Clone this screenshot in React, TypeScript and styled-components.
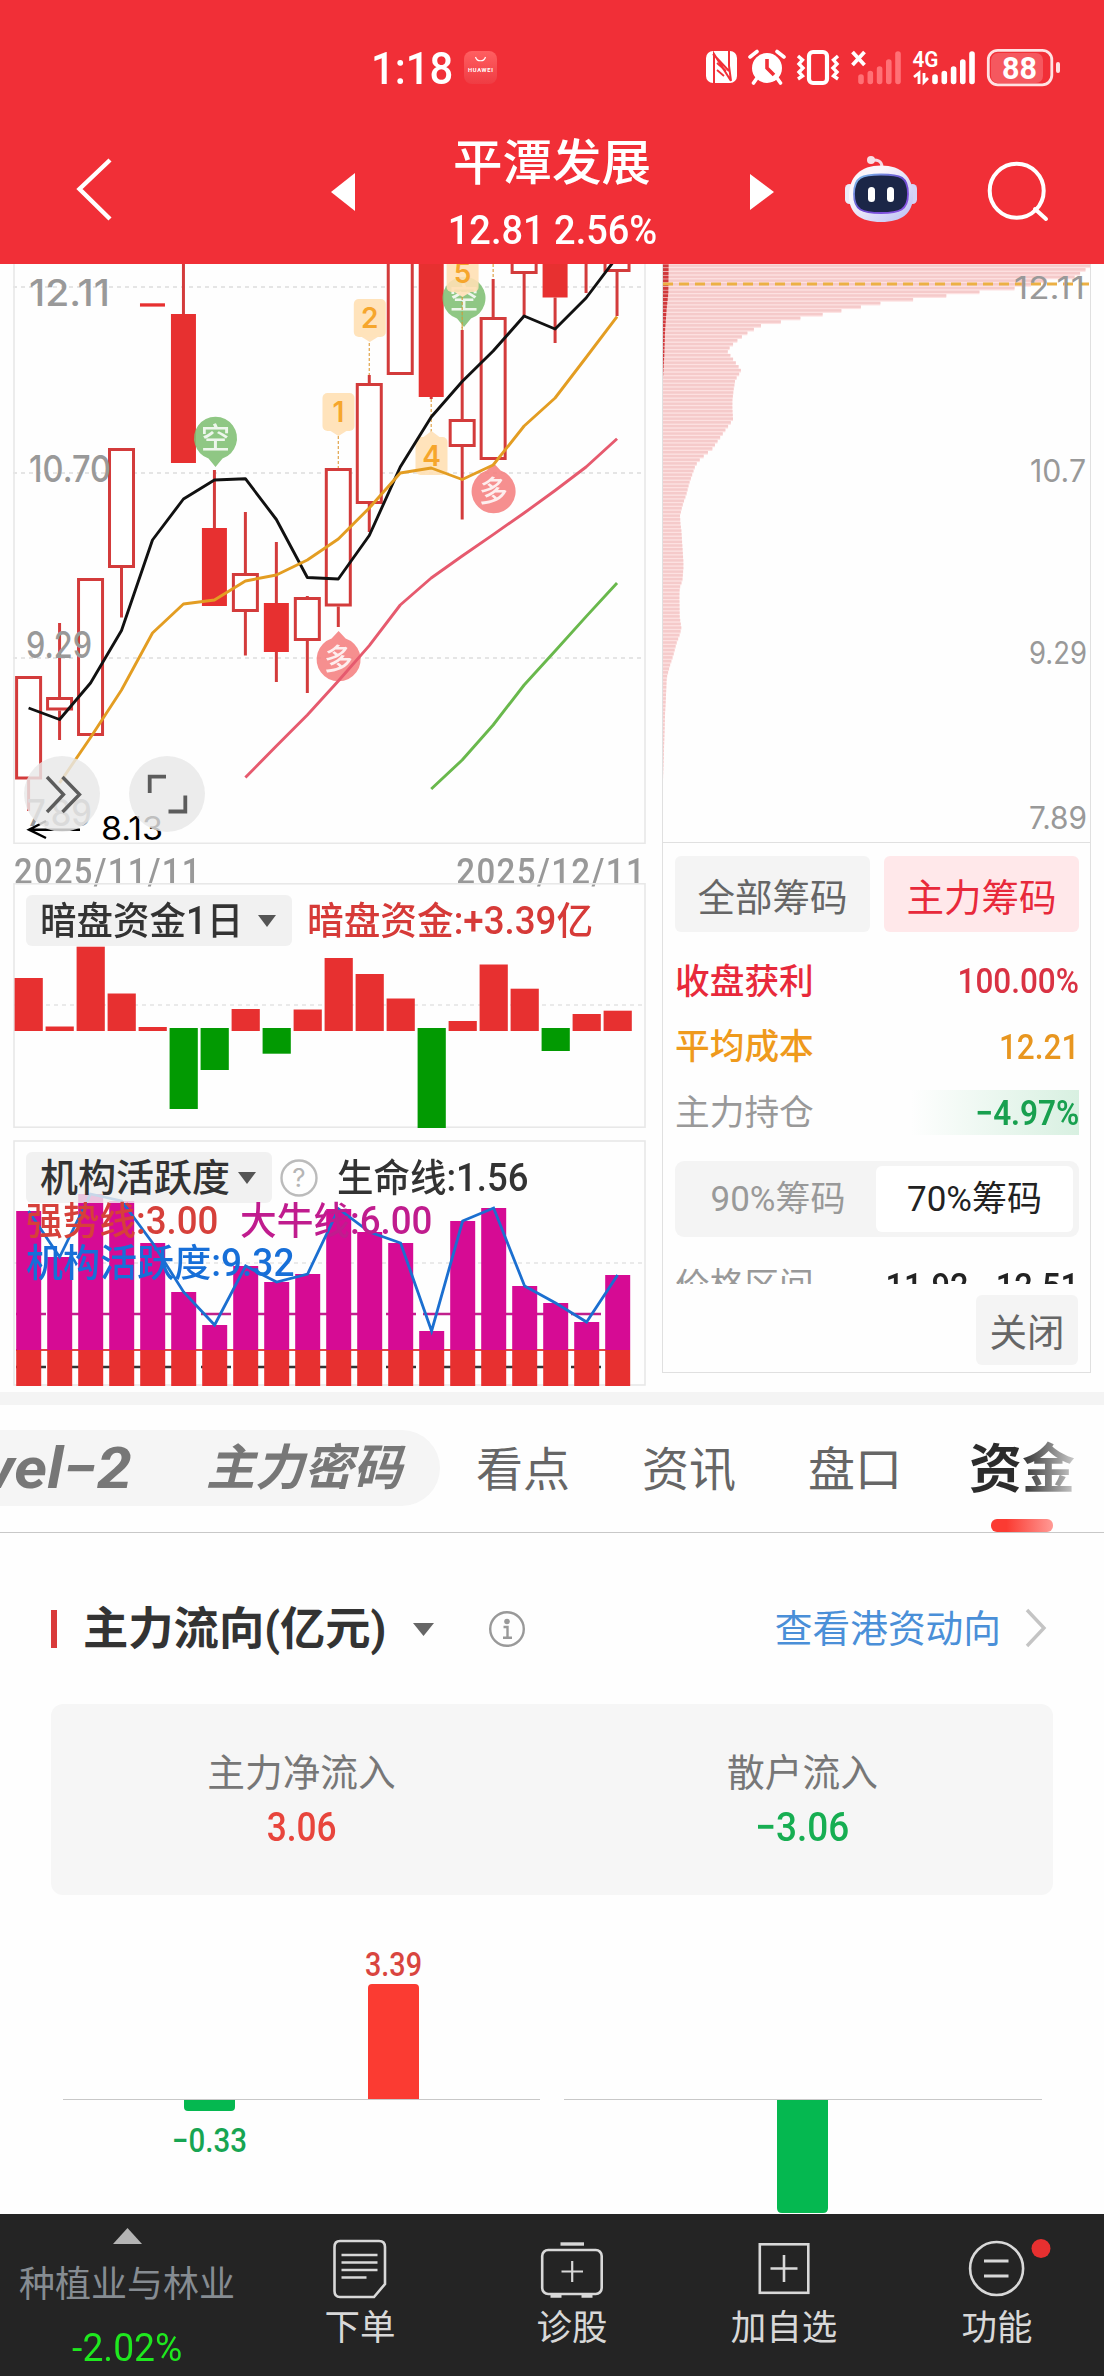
import React from 'react';
import styled, { createGlobalStyle } from 'styled-components';

const SANS = `Roboto, "Noto Sans CJK SC", sans-serif`;
const LABEL = `Inter, "Noto Sans CJK SC", sans-serif`;

const Global = createGlobalStyle`
  * { box-sizing: border-box; }
  body { margin: 0; background: #fefefe; font-family: ${SANS}; }
  svg { display: block; flex: none; }
`;

const Screen = styled.div`
  width: 1104px;
  height: 2376px;
  overflow: hidden;
  display: flex;
  flex-direction: column;
  background: #fefefe;
`;

const Txt = styled.span<{
  $size: number; $color?: string; $weight?: number; $scale?: number; $origin?: string; $track?: number;
}>`
  display: inline-block;
  white-space: nowrap;
  padding-top: 3px;
  line-height: 1.2;
  font-size: ${p => p.$size}px;
  color: ${p => p.$color || '#333'};
  font-weight: ${p => p.$weight || 400};
  letter-spacing: ${p => p.$track || 0}px;
  transform: scaleX(${p => p.$scale || 1});
  transform-origin: ${p => p.$origin || 'center'};
`;

/* ---------- header ---------- */
const Header = styled.header`
  height: 264px;
  flex: none;
  background: #f12f37;
  display: flex;
  flex-direction: column;
`;
const StatusBar = styled.div`
  height: 136px;
  display: grid;
  grid-template-columns: 333px 1fr;
  column-gap: 38px;
  align-items: center;
  padding-right: 44px;
`;
const Clock = styled.div`
  grid-column: 2;
  display: flex;
  align-items: center;
`;
const AppBadge = styled.div`
  width: 33px;
  height: 33px;
  margin-left: 6px;
  border-radius: 8px;
  background: linear-gradient(#ff5f61, #ef3c43);
`;
const StatusIcons = styled.div`
  margin-left: auto;
`;
const NavRow = styled.div`
  height: 128px;
  display: grid;
  grid-template-columns: 331px 24px 1fr 24px 70px 72px 188px;
`;
const Cell = styled.div<{ $pl?: number; $pt: number }>`
  padding: ${p => p.$pt}px 0 0 ${p => p.$pl || 0}px;
`;
const TitleBlock = styled.div`
  display: flex;
  flex-direction: column;
  align-items: center;
`;
const Name = styled(Txt)`
  height: 57px;
  padding-top: 1px;
  line-height: 54px;
`;
const Quote = styled(Txt)`
  padding-top: 0;
  line-height: 74px;
`;

/* ---------- charts ---------- */
const Charts = styled.section`
  height: 1128px;
  flex: none;
  display: grid;
  grid-template-columns: 650px 454px;
`;
const LeftCol = styled.div`
  display: flex;
  flex-direction: column;
`;
const Dates = styled.div`
  height: 39px;
  padding: 3px 4px 0 14px;
  display: flex;
  justify-content: space-between;
`;
const Panel = styled.div<{ $mb?: number }>`
  position: relative;
  margin-bottom: ${p => p.$mb || 0}px;
`;
const PanelHead = styled.div`
  position: absolute;
  left: 26px;
  top: 12px;
  display: flex;
  align-items: center;
`;
const Picker = styled.div<{ $w: number }>`
  width: ${p => p.$w}px;
  height: 51px;
  padding: 0 16px 0 14px;
  border-radius: 6px;
  background: rgba(238, 238, 238, 0.82);
  display: flex;
  align-items: center;
  justify-content: space-between;
`;
const Legend = styled.div<{ $top: number }>`
  position: absolute;
  left: 26px;
  top: ${p => p.$top}px;
  display: flex;
  gap: 15px;
`;

const ChipCol = styled.div`
  margin: 0 13px 0 12px;
  height: 1109px;
  border: 1px solid #e0e0e0;
  border-top: 0;
`;
const ChipBody = styled.div`
  border-top: 1px solid #e0e0e0;
  padding: 13px 11px 0 12px;
`;
const Buttons = styled.div`
  display: grid;
  grid-template-columns: 195px 195px;
  justify-content: space-between;
  height: 76px;
  margin-bottom: 16px;
`;
const Btn = styled.button<{ $on?: boolean }>`
  border: 0;
  padding: 0;
  border-radius: 6px;
  font: 400 37.5px ${SANS};
  white-space: nowrap;
  color: ${p => (p.$on ? '#e8293b' : '#666')};
  background: ${p => (p.$on ? '#ffe8ea' : '#f4f4f4')};
`;
const Row = styled.div`
  height: 65.8px;
  display: flex;
  align-items: center;
  justify-content: space-between;
`;
const Hold = styled.div`
  width: 168px;
  height: 45px;
  display: flex;
  justify-content: flex-end;
  align-items: center;
  background: linear-gradient(90deg, rgba(214, 240, 224, 0), #d8f0e1);
`;
const Segment = styled.div`
  height: 76px;
  margin-top: 15.6px;
  padding: 5px;
  border-radius: 9px;
  background: #f4f4f4;
  display: grid;
  grid-template-columns: 196px 197px;
`;
const SegItem = styled.div<{ $on?: boolean }>`
  display: flex;
  align-items: center;
  justify-content: center;
  border-radius: 6px;
  background: ${p => (p.$on ? '#fff' : 'transparent')};
`;
const Clipped = styled.div`
  height: 47px;
  overflow: hidden;
  padding-top: 26px;
  display: flex;
  justify-content: space-between;
`;
const Close = styled(Btn)`
  display: block;
  width: 102px;
  height: 70px;
  margin: 11px 1px 0 auto;
`;

/* ---------- tabs ---------- */
const Band = styled.div`
  height: 13px;
  flex: none;
  background: #f4f4f4;
`;
const Tabs = styled.nav`
  height: 128px;
  flex: none;
  border-bottom: 1px solid #c8c8c8;
  display: flex;
  align-items: flex-start;
`;
const Pill = styled.div`
  width: 440px;
  height: 76px;
  margin-top: 25px;
  border-radius: 0 38px 38px 0;
  background: #f5f5f5;
  display: flex;
  align-items: center;
  justify-content: flex-end;
  gap: 74px;
  padding-right: 38px;
  overflow: hidden;
  font-style: italic;
`;
const Tab = styled.div<{ $ml: number }>`
  margin-left: ${p => p.$ml}px;
  height: 127px;
  display: flex;
  flex-direction: column;
  align-items: center;
  & > span { line-height: 127px; padding-top: 1px; }
`;
const ActiveTab = styled(Tab)`
  position: relative;
  & > span {
    padding-top: 3px;
    line-height: 124px;
    background: linear-gradient(90deg, #2c2c2c 48%, #d0d0d0 102%);
    -webkit-background-clip: text;
    color: transparent;
  }
`;
const Indicator = styled.i`
  position: absolute;
  bottom: 0;
  width: 62px;
  height: 13px;
  border-radius: 6px;
  background: linear-gradient(90deg, #fb3b32 25%, #ff9a95);
`;

/* ---------- fund flow ---------- */
const Flow = styled.section`
  flex: none;
  height: 681px;
  padding: 0 51px;
`;
const FlowHead = styled.div`
  height: 171px;
  padding-top: 20px;
  display: flex;
  align-items: center;
`;
const Mark = styled.i`
  width: 6px;
  height: 38px;
  margin-right: 26px;
  background: #d93a3a;
`;
const Link = styled.a`
  margin-left: auto;
  display: flex;
  align-items: center;
  gap: 23px;
  padding-right: 6px;
`;
const Card = styled.div`
  height: 191px;
  border-radius: 12px;
  background: #f6f6f6;
  display: grid;
  grid-template-columns: 1fr 1fr;
`;
const Stat = styled.div`
  display: flex;
  flex-direction: column;
  align-items: center;
  padding-top: 44px;
  gap: 4px;
`;
const FlowChart = styled.div`
  margin: 0 -51px;
`;

/* ---------- footer ---------- */
const Footer = styled.footer`
  height: 163px;
  flex: none;
  background: #242424;
  display: grid;
  grid-template-columns: 254px 212px 212px 212px 214px;
`;
const Sector = styled.div`
  display: flex;
  flex-direction: column;
  align-items: center;
  gap: 19px;
  padding-top: 14px;
  & > span { line-height: 43px; padding-top: 1px; }
`;
const Action = styled.div`
  display: flex;
  flex-direction: column;
  align-items: center;
  padding-top: 21px;
  gap: 3px;
`;

/* ---------- data ---------- */
const cx = (i: number) => 28.6 + i * 30.97;
type Candle = { f?: boolean; t: number; b: number; h?: number; l?: number };
const candles: Candle[] = [
  { t: 676, b: 779.5, l: 811 }, { t: 697, b: 710.5, h: 623, l: 740 }, { t: 578, b: 736 },
  { t: 448, b: 568, l: 617.5 }, { f: true, t: 303.3, b: 306.6 }, { f: true, t: 314, b: 463, h: 250 },
  { f: true, t: 528, b: 606, h: 470 }, { t: 573, b: 612, h: 512, l: 655.5 },
  { f: true, t: 603, b: 652, h: 542, l: 682 }, { t: 597, b: 641, h: 596, l: 693 },
  { t: 468, b: 606.5, l: 627 }, { t: 383, b: 504, h: 375, l: 532 }, { t: 240, b: 375 },
  { f: true, t: 240, b: 397, l: 399 }, { t: 419, b: 447, h: 330, l: 519.5 },
  { t: 317, b: 460, h: 279 }, { t: 240, b: 274, l: 316 }, { f: true, t: 240, b: 297.5, l: 343 },
  { t: 240, b: 250, l: 293 }, { t: 240, b: 272, l: 316 },
];
const path = (start: number, ys: number[]) => ys.map((y, k) => `${cx(start + k)},${y}`).join(' ');
const ma5 = [708, 719.5, 683, 630.5, 540, 499, 480, 478.7, 519.5, 577.5, 579, 535.5, 467, 417, 381.5, 351, 316, 329, 298, 257];
const ma10 = [783, 737.5, 690, 633, 604, 600, 581, 575, 560, 539, 508, 473, 468, 479.5, 465, 426, 398, 357.5, 316.6];
const ma20 = [777.5, 746, 715, 681, 645.6, 605, 578, 556, 534.6, 513, 490.5, 467, 438.7];
const ma30 = [789, 760, 725, 685, 651, 616.6, 583];
const dark = [978, 1026.5, 946.7, 993.5, 1027, 1109, 1070, 1009, 1053.7, 1009.5, 958, 974, 998.5, 1128, 1021, 964.5, 988.7, 1051, 1014, 1010.7];
const active = [1211, 1257, 1194, 1201, 1243, 1292, 1325, 1266, 1282, 1274, 1209, 1232, 1243, 1331, 1221, 1208, 1286, 1303, 1322, 1275];

const chipProfile: [number, number][] = [
  [28, 1284], [38, 1267], [47, 1252], [57, 1237], [67, 1150], [86, 1060], [95, 962], [105, 860], [115, 758], [125, 655],
  [135, 595], [145, 535], [154, 484], [164, 415], [174, 355], [184, 294], [194, 272], [203, 254], [213, 237], [223, 223],
  [232, 211], [242, 200], [252, 194], [262, 202], [281, 218], [300, 234], [310, 229], [320, 221], [330, 216], [350, 212],
  [380, 208], [400, 208], [428, 210], [438, 203], [457, 187], [497, 155], [507, 147], [516, 134], [526, 121], [536, 109],
  [545, 101], [555, 95], [575, 87], [595, 79], [625, 70], [655, 58], [680, 51], [700, 52], [720, 55], [760, 58], [800, 61],
  [820, 61], [850, 58], [870, 50], [890, 49], [945, 50], [975, 55], [995, 49], [1015, 40], [1045, 31], [1075, 20],
  [1105, 11], [1150, 9], [1200, 6], [1260, 4], [1320, 2], [1370, 0],
];
const mainProfile: [number, number][] = [[20, 17], [100, 16], [140, 11], [200, 6], [260, 4], [320, 0]];
const lerp = (pts: [number, number][], y: number) => {
  for (let i = 1; i < pts.length; i++) {
    const [y0, v0] = pts[i - 1];
    const [y1, v1] = pts[i];
    if (y <= y1) return Math.max(0, v0 + ((v1 - v0) * (y - y0)) / (y1 - y0));
  }
  return 0;
};

const CW: React.FC<{ x: number; y: number; w: number; size: number; fill: string; anchor?: 'start' | 'end'; weight?: number; children: string }> =
  ({ x, y, w, size, fill, anchor, weight, children }) => (
    <text x={anchor === 'end' ? x - w : x} y={y} fontSize={size} fill={fill} fontFamily={LABEL} fontWeight={weight || 400}
      textLength={w} lengthAdjust="spacingAndGlyphs">{children}</text>
  );

const Caret = ({ w = 18, h = 12, color = '#555' }) => (
  <svg width={w} height={h}><path d={`M0 0H${w}L${w / 2} ${h}Z`} fill={color} /></svg>
);

const Bubble: React.FC<{ x: number; y: number; up?: boolean; color: string; children: string }> = ({ x, y, up, color, children }) => (
  <g>
    <g fill={color} fillOpacity={0.88}>
      <path d={up
        ? `M${x} ${y - 28}L${x + 7} ${y - 20.5}A22 22 0 1 1 ${x - 7} ${y - 20.5}Z`
        : `M${x} ${y + 29}L${x - 7} ${y + 20.5}A21.5 21.5 0 1 1 ${x + 7} ${y + 20.5}Z`} />
    </g>
    <text x={x} y={y + 10.5} fontSize={29} fontWeight={500} textAnchor="middle" fill="#fff" fontFamily={SANS} opacity={0.85}>{children}</text>
  </g>
);

const Tag: React.FC<{ x: number; y: number; up?: boolean; children: string }> = ({ x, y, up, children }) => (
  <g>
    <rect x={x - 16} y={y} width={32} height={38} rx={5} fill="#ffe0b4" opacity={0.9} />
    <path d={up ? `M${x - 8} ${y}L${x} ${y - 6}L${x + 8} ${y}Z` : `M${x - 8} ${y + 38}L${x} ${y + 43}L${x + 8} ${y + 38}Z`} fill="#ffe3bd" />
    <text x={x} y={y + 29} fontSize={28} fontWeight={600} textAnchor="middle" fill="#f6a62c" fontFamily={LABEL}>{children}</text>
  </g>
);

const KLine = () => (
  <svg width={650} height={580} viewBox="0 264 650 580">
    <g stroke="#ddd" strokeWidth={1.3} strokeDasharray="4 4">
      <path d="M13 287H645M13 473H645M13 658H645" />
    </g>
    <path d="M14 264V843.2H645V264" fill="none" stroke="#e8e8e8" strokeWidth={1.6} />
    {candles.map((c, i) => (
      <g key={i}>
        {c.h && <path d={`M${cx(i)} ${c.h}V${c.t}`} stroke="#d33b3b" strokeWidth={3} />}
        {c.l && <path d={`M${cx(i)} ${c.b}V${c.l}`} stroke="#d33b3b" strokeWidth={3} />}
        {c.f
          ? <rect x={cx(i) - 12.5} y={c.t} width={25} height={c.b - c.t} fill="#e73030" />
          : <rect x={cx(i) - 12} y={c.t + 1.5} width={24} height={c.b - c.t - 3} fill="#fff" stroke="#d33b3b" strokeWidth={3} />}
      </g>
    ))}
    <CW x={29} y={306} w={81} size={36.5} fill="#999" weight={500}>12.11</CW>
    <CW x={29} y={482} w={82} size={36.5} fill="#999" weight={500}>10.70</CW>
    <CW x={26} y={658} w={66} size={36.5} fill="#999" weight={500}>9.29</CW>
    <CW x={27} y={826} w={65} size={36.5} fill="#999" weight={500}>7.89</CW>
    <g stroke="#e0a44a" strokeWidth={1.2} strokeDasharray="3 2">
      <path d={`M${cx(10)} 436V468M${cx(11)} 343V375M${cx(13)} 399V432M${cx(14)} 290V330M${cx(15)} 264V279`} />
    </g>
    <Bubble x={215.5} y={438} color="#7fbf73">空</Bubble>
    <Bubble x={338.6} y={659} up color="#f57f80">多</Bubble>
    <Bubble x={493.6} y={491} up color="#f57f80">多</Bubble>
    <Tag x={338.5} y={393}>1</Tag>
    <Tag x={369.8} y={299}>2</Tag>
    <Tag x={431.5} y={437} up>4</Tag>
    <Bubble x={464} y={298} color="#7fbf73">空</Bubble>
    <Tag x={462.6} y={254}>5</Tag>
    <path d={`M${cx(14)} 297V330`} stroke="#c9a040" strokeWidth={1.2} strokeDasharray="3 2" />
    <g fill="none" strokeWidth={2.9} strokeLinejoin="round">
      <polyline points={path(0, ma5)} stroke="#111" />
      <polyline points={path(1, ma10)} stroke="#e39d22" />
      <polyline points={path(7, ma20)} stroke="#e65a6e" />
      <polyline points={path(13, ma30)} stroke="#69b84c" />
    </g>
    <path d="M80 829.7H30M46 821L29 829.7L46 838" fill="none" stroke="#000" strokeWidth={2.4} />
    <CW x={101} y={839.5} w={62} size={32} fill="#000">8.13</CW>
    <g fill="#e9e9e9" opacity={0.82}>
      <circle cx={62} cy={794} r={38} />
      <circle cx={167} cy={794} r={38} />
    </g>
    <g fill="none" stroke="#5c5c5c">
      <path d="M47 777L63.5 794.5L47 812M62.5 777L79.5 794.5L62.5 812" strokeWidth={3.4} />
      <path d="M149.7 793V776.7H166M185.3 795.5V811.5H168.5" strokeWidth={3.8} />
    </g>
  </svg>
);

const HiddenFunds = () => (
  <svg width={650} height={246} viewBox="0 883 650 246">
    <rect x={14} y={883.8} width={631} height={243.4} fill="none" stroke="#e8e8e8" strokeWidth={1.6} />
    <path d="M14 1005H645" stroke="#e4e4e4" strokeWidth={1.4} strokeDasharray="4 4" />
    {dark.map((v, i) => {
      const neg = [5, 6, 8, 13, 17].includes(i);
      const top = neg ? 1028 : v;
      return <rect key={i} x={14.6 + i * 31} y={top} width={28.2} height={(neg ? v : 1031) - top} fill={neg ? '#029a02' : '#e73030'} />;
    })}
  </svg>
);

const Activity = () => (
  <svg width={650} height={252} viewBox="0 1140 650 252">
    <rect x={14} y={1141} width={631} height={244} fill="none" stroke="#e8e8e8" strokeWidth={1.6} />
    <path d="M14 1263H645" stroke="#e4e4e4" strokeWidth={1.4} strokeDasharray="4 4" />
    <path d="M16 1314H604" stroke="#c0208c" strokeWidth={2.4} strokeDasharray="30 7" />
    <path d="M16 1367H604" stroke="#333" strokeWidth={2.4} strokeDasharray="30 7" />
    <path d="M16 1350H629" stroke="#e04545" strokeWidth={2.2} />
    {active.map((v, i) => (
      <g key={i}>
        <rect x={16.2 + i * 31} y={v} width={25} height={1350 - v} fill="#d60b94" />
        <rect x={16.2 + i * 31} y={1350} width={25} height={36} fill="#e73030" />
      </g>
    ))}
    <polyline points={active.map((v, i) => `${28.6 + i * 31},${v}`).join(' ')} fill="none" stroke="#1b6fd0" strokeWidth={2.8} />
  </svg>
);

const ChipChart = () => {
  const rows = Array.from({ length: 139 }, (_, k) => 28 + k * 9.75);
  return (
    <svg width={427} height={578} viewBox="663 264 427 578">
      {rows.map((y, k) => {
        const w = lerp(chipProfile, y) / 3;
        const m = lerp(mainProfile, y) / 3;
        const py = 255 + (y - 3.5) / 2.613;
        return (
          <g key={k}>
            <rect x={663} y={py} width={w} height={3.73} fill="#fde1e1" />
            <rect x={663} y={py} width={w} height={2.5} fill="#f5caca" />
            <rect x={663} y={py} width={m} height={3.1} fill="#d0393c" />
          </g>
        );
      })}
      <path d="M663 284H1089" stroke="#ecb044" strokeWidth={3} strokeDasharray="10 6" />
      <CW x={1085} y={299} w={71} size={30.5} fill="#999" anchor="end">12.11</CW>
      <CW x={1086} y={481.5} w={56} size={30.5} fill="#999" anchor="end">10.7</CW>
      <CW x={1087} y={663.5} w={58} size={30.5} fill="#999" anchor="end">9.29</CW>
      <CW x={1087} y={828.5} w={58} size={30.5} fill="#999" anchor="end">7.89</CW>
    </svg>
  );
};

const StatusGlyphs = () => (
  <svg width={356} height={40} viewBox="704 48 356 40">
    <rect x={706} y={51} width={31} height={32} rx={7} fill="#fff" />
    <path d="M714 83V54L731 81M729 51V66L731 81M713 54L729 71" fill="none" stroke="#f12f37" strokeWidth={2} />
    <path d="M717 63L726 71M717 70L724 76" stroke="#f12f37" strokeWidth={1.8} />
    <circle cx={767} cy={68} r={15} fill="#fff" />
    <path d="M750 57L757 51.5M784 57L777 51.5M757 78L753.5 83M777 78L780.5 83" stroke="#fff" strokeWidth={3.6} strokeLinecap="round" />
    <path d="M767 59V68L774 75" fill="none" stroke="#f12f37" strokeWidth={3.6} />
    <rect x={809} y={52} width={18} height={31} rx={4} fill="none" stroke="#fff" strokeWidth={4.2} />
    <path d="M798 56L802.500 60L799 64L803 68L799 72L802.500 76L798 79M838 56L833.500 60L837 64L833 68L837 72L833.500 76L838 79" fill="none" stroke="#fff" strokeWidth={3.4} />
    <path d="M852.500 52L864.500 65M864.500 52L852.500 65" stroke="#fff" strokeWidth={3.8} />
    <g stroke="#ff7176" strokeWidth={5.6} strokeLinecap="round">
      <path d="M861 77V81.500M870.300 73.500V81.500M879.600 69V81.500M888.800 62V81.500M898 54V81.500" />
    </g>
    <g stroke="#fff" strokeWidth={5.6} strokeLinecap="round">
      <path d="M935 77V81.500M944.300 73.500V81.500M953.600 69V81.500M962.800 62V81.500M972 54V81.500" />
    </g>
    <text x={912.500} y={67} fontSize={22} fontWeight={600} fill="#fff" fontFamily={SANS} textLength={26} lengthAdjust="spacingAndGlyphs">4G</text>
    <path d="M914 77L919 73V84M924 73V82L928 78" fill="none" stroke="#fff" strokeWidth={2.8} />
    <rect x={991} y={53} width={52} height={30} rx={7} fill="#f5585f" />
    <rect x={988.300} y={50.300} width={63.500} height={34.500} rx={9.500} fill="none" stroke="#ffe2e3" strokeWidth={2.8} />
    <rect x={1056} y={62} width={4} height={11} rx={2} fill="#ffe2e3" />
    <text x={1002} y={79} fontSize={31} fontWeight={700} fill="#fff" fontFamily={SANS} textLength={35} lengthAdjust="spacingAndGlyphs">88</text>
  </svg>
);

const Robot = () => (
  <svg width={74} height={70} viewBox="843 154 74 70">
    <defs>
      <linearGradient id="shell" x1="0" y1="0" x2="1" y2="1">
        <stop offset="0.3" stopColor="#fbf6fb" /><stop offset="1" stopColor="#b9bdf4" />
      </linearGradient>
      <linearGradient id="rim" x1="0" y1="0" x2="1" y2="1">
        <stop offset="0" stopColor="#7fc8ee" /><stop offset="0.5" stopColor="#6a4bd0" /><stop offset="1" stopColor="#8d55e6" />
      </linearGradient>
    </defs>
    <path d="M881 167C881 161 876 159.500 871 160" fill="none" stroke="#f6d9e4" strokeWidth={3} />
    <circle cx={870} cy={160} r={4} fill="#f8dfe6" />
    <rect x={844} y={184} width={9} height={20} rx={4.500} fill="#eceaf8" />
    <rect x={907} y={184} width={9} height={20} rx={4.500} fill="#d5d3f6" />
    <path d="M880 165.500C901 165.500 912 177 912 196C912 213 901 222 880 222C859 222 848 213 848 196C848 177 859 165.500 880 165.500Z" fill="url(#shell)" />
    <path d="M880 174.500C900 174.500 907 177 907 194C907 210 899 213 880 213C861 213 853 210 853 194C853 177 861 174.500 880 174.500Z" fill="#1b2647" stroke="url(#rim)" strokeWidth={1.800} />
    <rect x={867} y={187} width={7} height={15} rx={3.500} fill="#fff" />
    <rect x={886} y={187} width={7} height={15} rx={3.500} fill="#fff" />
  </svg>
);

const ic = { fill: 'none', stroke: '#d8d8d8', strokeWidth: 2.6 };

export default function App() {
  return (
    <Screen>
      <Global />
      <Header>
        <StatusBar>
          <Clock>
            <Txt $size={44} $weight={500} $color="#fff" $scale={0.95} $origin="left">1:18</Txt>
            <AppBadge>
              <svg width={33} height={33}>
                <path d="M11.500 6A5.200 5.200 0 0 0 21.500 6" fill="none" stroke="#fff" strokeWidth={1.200} />
                <text x={4} y={21} fontSize={5.800} fill="#fff" fontWeight={700} fontFamily={SANS} textLength={25}>HUAWEI</text>
              </svg>
            </AppBadge>
            <StatusIcons><StatusGlyphs /></StatusIcons>
          </Clock>
        </StatusBar>
        <NavRow>
          <Cell $pl={76} $pt={21}>
            <svg width={38} height={64}><path d="M34 3L3.500 32L34 62" fill="none" stroke="#fff" strokeWidth={4.400} /></svg>
          </Cell>
          <Cell $pt={37}><svg width={24} height={38}><path d="M24 0V38L0 19Z" fill="#fff" /></svg></Cell>
          <TitleBlock>
            <Name $size={49} $weight={500} $color="#fff" $scale={1.01}>平潭发展</Name>
            <Quote $size={41.5} $color="#fff" $weight={500} $scale={0.915}>12.81 2.56%</Quote>
          </TitleBlock>
          <Cell $pt={38}><svg width={24} height={36}><path d="M0 0V36L24 18Z" fill="#fff" /></svg></Cell>
          <span />
          <Cell $pt={18}><Robot /></Cell>
          <Cell $pl={71} $pt={25}>
            <svg width={64} height={64} viewBox="987 161 64 64">
              <circle cx={1016.700} cy={190.700} r={27} fill="none" stroke="#fff" strokeWidth={4} />
              <path d="M1035 209L1046 219" stroke="#fff" strokeWidth={4} strokeLinecap="round" />
            </svg>
          </Cell>
        </NavRow>
      </Header>

      <Charts>
        <LeftCol>
          <KLine />
          <Dates>
            <Txt $size={37} $color="#999" $weight={500} $track={1.5} $scale={0.885} $origin="left">2025/11/11</Txt>
            <Txt $size={37} $color="#999" $weight={500} $track={1.5} $scale={0.895} $origin="right">2025/12/11</Txt>
          </Dates>
          <Panel $mb={11}>
            <HiddenFunds />
            <PanelHead>
              <Picker $w={266}>
                <Txt $size={38} $weight={500} $scale={0.96} $origin="left">暗盘资金1日</Txt><Caret />
              </Picker>
              <Txt $size={38} $color="#d63a38" $weight={500} $scale={0.965} $origin="left" style={{ marginLeft: 15 }}>暗盘资金:+3.39亿</Txt>
            </PanelHead>
          </Panel>
          <Panel>
            <Activity />
            <PanelHead>
              <Picker $w={246}>
                <Txt $size={38} $weight={500}>机构活跃度</Txt><Caret />
              </Picker>
              <svg width={65} height={44}>
                <circle cx={27} cy={22} r={17.500} fill="none" stroke="#bbb" strokeWidth={2.400} />
                <text x={27} y={31} fontSize={26} textAnchor="middle" fill="#b5b5b5" fontFamily={LABEL}>?</text>
              </svg>
              <Txt $size={38} $weight={500} $scale={0.96} $origin="left">生命线:1.56</Txt>
            </PanelHead>
            <Legend $top={56}>
              <Txt $size={38} $color="#d6403a" $weight={500} $scale={0.965} $origin="left">强势线:3.00</Txt>
              <Txt $size={38} $color="#c01c8e" $weight={500} $scale={0.965} $origin="left">大牛线:6.00</Txt>
            </Legend>
            <Legend $top={98}>
              <Txt $size={38} $color="#176fd8" $weight={500} $scale={0.975} $origin="left">机构活跃度:9.32</Txt>
            </Legend>
          </Panel>
        </LeftCol>

        <ChipCol>
          <ChipChart />
          <ChipBody>
            <Buttons>
              <Btn>全部筹码</Btn>
              <Btn $on>主力筹码</Btn>
            </Buttons>
            <Row>
              <Txt $size={34.7} $color="#e8293b" $weight={500}>收盘获利</Txt>
              <Txt $size={35} $color="#d93243" $weight={500} $scale={0.9} $origin="right">100.00%</Txt>
            </Row>
            <Row>
              <Txt $size={34.7} $color="#ef9a1c" $weight={500}>平均成本</Txt>
              <Txt $size={35} $color="#e8961f" $weight={500} $scale={0.9} $origin="right">12.21</Txt>
            </Row>
            <Row>
              <Txt $size={34.7} $color="#999">主力持仓</Txt>
              <Hold><Txt $size={35} $color="#18a04f" $weight={600} $scale={0.9} $origin="right">−4.97%</Txt></Hold>
            </Row>
            <Segment>
              <SegItem><Txt $size={35} $color="#999">90%筹码</Txt></SegItem>
              <SegItem $on><Txt $size={35} $color="#222">70%筹码</Txt></SegItem>
            </Segment>
            <Clipped>
              <Txt $size={34.7} $color="#999">价格区间</Txt>
              <Txt $size={35} $color="#222" $weight={500} $scale={0.93} $origin="right">11.92 - 12.51</Txt>
            </Clipped>
            <Close>关闭</Close>
          </ChipBody>
        </ChipCol>
      </Charts>

      <Band />
      <Tabs>
        <Pill>
          <Txt $size={57} $color="#777" $weight={700} $scale={1.1} $origin="right">Level−2</Txt>
          <Txt $size={49} $color="#777" $weight={700}>主力密码</Txt>
        </Pill>
        <Tab $ml={36}><Txt $size={47} $color="#666">看点</Txt></Tab>
        <Tab $ml={72}><Txt $size={47} $color="#666">资讯</Txt></Tab>
        <Tab $ml={72}><Txt $size={47} $color="#666">盘口</Txt></Tab>
        <ActiveTab $ml={67}><Txt $size={53} $weight={700}>资金</Txt><Indicator /></ActiveTab>
      </Tabs>

      <Flow>
        <FlowHead>
          <Mark />
          <Txt $size={45.3} $weight={700} $color="#333">主力流向(亿元)</Txt>
          <svg width={150} height={40}>
            <path d="M26 14H47L36.500 27Z" fill="#666" />
            <circle cx={120} cy={20} r={16.800} fill="none" stroke="#999" strokeWidth={2.400} />
            <circle cx={120} cy={12.500} r={2.800} fill="#999" />
            <path d="M116.500 18H120.500V28.500M116 28.700H125" fill="none" stroke="#999" strokeWidth={2.400} />
          </svg>
          <Link>
            <Txt $size={37.7} $color="#4a8fd8">查看港资动向</Txt>
            <svg width={23} height={40}><path d="M3 2L20 20L3 38" fill="none" stroke="#c4c4c4" strokeWidth={3.400} /></svg>
          </Link>
        </FlowHead>
        <Card>
          <Stat>
            <Txt $size={37.7} $color="#777">主力净流入</Txt>
            <Txt $size={41} $color="#e8453c" $weight={500} $scale={0.86}>3.06</Txt>
          </Stat>
          <Stat>
            <Txt $size={37.7} $color="#777">散户流入</Txt>
            <Txt $size={41} $color="#17ae52" $weight={500} $scale={0.9}>−3.06</Txt>
          </Stat>
        </Card>
        <FlowChart>
          <svg width={1104} height={319} viewBox="0 1895 1104 319">
            <path d="M368 2099V1988Q368 1984 372 1984H415Q419 1984 419 1988V2099Z" fill="#fb3b32" />
            <path d="M184 2100H235V2107Q235 2111 231 2111H188Q184 2111 184 2107Z" fill="#05b850" />
            <path d="M777 2100H828V2208Q828 2213 823 2213H782Q777 2213 777 2208Z" fill="#05b850" />
            <path d="M63 2099.500H540M564 2099.500H1042" stroke="#c8c8c8" strokeWidth={1.200} />
            <g fontFamily={SANS} fontSize={33} fontWeight={500}>
              <text x={365} y={1975.500} fill="#d9453f" textLength={57} lengthAdjust="spacingAndGlyphs">3.39</text>
              <text x={172} y={2151.500} fill="#17a552" textLength={75} lengthAdjust="spacingAndGlyphs">−0.33</text>
            </g>
          </svg>
        </FlowChart>
      </Flow>

      <Footer>
        <Sector>
          <svg width={29} height={16}><path d="M0 16H29L14.500 0Z" fill="#b4b4b4" /></svg>
          <Txt $size={36} $color="#868c92">种植业与林业</Txt>
          <Txt $size={38} $color="#1fe81f" $scale={0.98}>-2.02%</Txt>
        </Sector>
        <Action>
          <svg width={62} height={66} viewBox="329 2235 62 66" {...ic}>
            <path d="M340 2241H379Q385 2241 385 2247V2284L374 2297H340Q334.500 2297 334.500 2291V2247Q334.500 2241 340 2241Z" />
            <path d="M341.500 2255H377.500M341.500 2262.500H377.500M341.500 2270H377.500M341.500 2277.500H366.500" />
          </svg>
          <Txt $size={35.5} $color="#d8d8d8">下单</Txt>
        </Action>
        <Action>
          <svg width={66} height={66} viewBox="538.500 2235 66 66" {...ic}>
            <path d="M560 2244H583.500" strokeWidth={3.400} />
            <rect x={541.700} y={2250} width={59.500} height={44} rx={6} />
            <path d="M550 2296H561M581 2296H592" strokeWidth={3.600} />
            <path d="M561 2271.500H582.500M571.700 2261V2282" strokeWidth={2.200} />
          </svg>
          <Txt $size={35.5} $color="#d8d8d8">诊股</Txt>
        </Action>
        <Action>
          <svg width={62} height={66} viewBox="753.500 2235 62 66" {...ic}>
            <rect x={760.300} y={2244.300} width={48.500} height={48.500} />
            <path d="M771 2268.500H798M784.500 2255V2282" />
          </svg>
          <Txt $size={35.5} $color="#d8d8d8">加自选</Txt>
        </Action>
        <Action>
          <svg width={110} height={66} viewBox="943 2235 110 66" {...ic}>
            <circle cx={997.600} cy={2268.500} r={26.500} />
            <path d="M985 2261H1009.500M985 2276H1009.500" strokeWidth={3} />
            <circle cx={1042} cy={2248.500} r={9.500} fill="#e73030" stroke="none" />
          </svg>
          <Txt $size={35.5} $color="#d8d8d8">功能</Txt>
        </Action>
      </Footer>
    </Screen>
  );
}
